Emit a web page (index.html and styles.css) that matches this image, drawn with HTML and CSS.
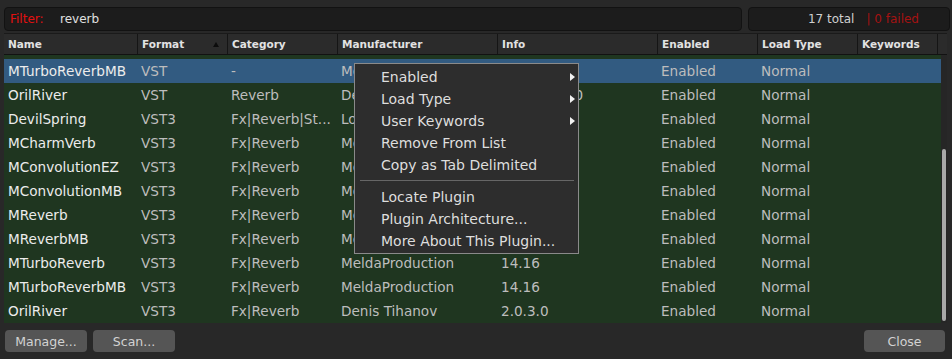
FILE: index.html
```html
<!DOCTYPE html>
<html lang="en">
<head>
  <meta charset="UTF-8">
  <title>Plugin Manager</title>
  <link rel="stylesheet" href="styles.css">
</head>
<body>
  <div class="top-bar">
    <div class="filter-box">
      <span class="filter-label">Filter:</span>
      <span class="filter-text">reverb</span>
    </div>
    <div class="count-box">
      <span class="total">17 total</span>
      <span class="failed">| 0 failed</span>
    </div>
  </div>

  <div class="plugin-table">
    <div class="head-row">
      <div class="hcell">Name</div>
      <div class="hcell sorted">Format<span class="sort-arrow"></span></div>
      <div class="hcell">Category</div>
      <div class="hcell">Manufacturer</div>
      <div class="hcell">Info</div>
      <div class="hcell">Enabled</div>
      <div class="hcell">Load Type</div>
      <div class="hcell">Keywords</div>
      <div class="hcell filler"></div>
    </div>
    <div class="table-body">
      <div class="rows">
        <!-- info cells under the open menu are left empty -->
        <div class="row selected"><span class="name">MTurboReverbMB</span><span>VST</span><span>-</span><span>MeldaProduction</span><span></span><span>Enabled</span><span>Normal</span><span></span></div>
        <div class="row"><span class="name">OrilRiver</span><span>VST</span><span>Reverb</span><span>Denis Tihanov</span><span>2020.3.30.0</span><span>Enabled</span><span>Normal</span><span></span></div>
        <div class="row"><span class="name">DevilSpring</span><span>VST3</span><span>Fx|Reverb|St...</span><span>Lostin70s</span><span></span><span>Enabled</span><span>Normal</span><span></span></div>
        <div class="row"><span class="name">MCharmVerb</span><span>VST3</span><span>Fx|Reverb</span><span>MeldaProduction</span><span></span><span>Enabled</span><span>Normal</span><span></span></div>
        <div class="row"><span class="name">MConvolutionEZ</span><span>VST3</span><span>Fx|Reverb</span><span>MeldaProduction</span><span></span><span>Enabled</span><span>Normal</span><span></span></div>
        <div class="row"><span class="name">MConvolutionMB</span><span>VST3</span><span>Fx|Reverb</span><span>MeldaProduction</span><span></span><span>Enabled</span><span>Normal</span><span></span></div>
        <div class="row"><span class="name">MReverb</span><span>VST3</span><span>Fx|Reverb</span><span>MeldaProduction</span><span></span><span>Enabled</span><span>Normal</span><span></span></div>
        <div class="row"><span class="name">MReverbMB</span><span>VST3</span><span>Fx|Reverb</span><span>MeldaProduction</span><span></span><span>Enabled</span><span>Normal</span><span></span></div>
        <div class="row"><span class="name">MTurboReverb</span><span>VST3</span><span>Fx|Reverb</span><span>MeldaProduction</span><span>14.16</span><span>Enabled</span><span>Normal</span><span></span></div>
        <div class="row"><span class="name">MTurboReverbMB</span><span>VST3</span><span>Fx|Reverb</span><span>MeldaProduction</span><span>14.16</span><span>Enabled</span><span>Normal</span><span></span></div>
        <div class="row"><span class="name">OrilRiver</span><span>VST3</span><span>Fx|Reverb</span><span>Denis Tihanov</span><span>2.0.3.0</span><span>Enabled</span><span>Normal</span><span></span></div>
      </div>
      <div class="scroll-track">
        <div class="scroll-thumb"></div>
      </div>
    </div>
  </div>

  <div class="bottom-bar">
    <button class="btn">Manage...</button>
    <button class="btn">Scan...</button>
    <button class="btn close">Close</button>
  </div>

  <!-- context menu over the selected row -->
  <div class="context-menu">
    <div class="menu-item">Enabled<span class="sub-arrow"></span></div>
    <div class="menu-item">Load Type<span class="sub-arrow"></span></div>
    <div class="menu-item">User Keywords<span class="sub-arrow"></span></div>
    <div class="menu-item">Remove From List</div>
    <div class="menu-item">Copy as Tab Delimited</div>
    <div class="menu-sep"></div>
    <div class="menu-item">Locate Plugin</div>
    <div class="menu-item">Plugin Architecture...</div>
    <div class="menu-item">More About This Plugin...</div>
  </div>
</body>
</html>
```

FILE: styles.css
```css
body {
  margin: 0;
  background-color: #282828;
  font-family: "DejaVu Sans", Verdana, sans-serif;
  color: #ccc;
  position: relative;
  width: 952px;
  height: 359px;
  overflow: hidden;
}
.top-bar {
  display: flex;
  gap: 6px;
  padding: 7px 0 0 4px;
  height: 24px;
}
.filter-box, .count-box {
  height: 22px;
  background-color: #1c1c1c;
  border: 1px solid #121212;
  border-radius: 4px;
  display: flex;
  align-items: center;
  font-size: 12px;
}
.filter-box {
  width: 731px;
  padding-left: 5px;
  box-sizing: content-box;
}
.filter-label {
  color: #e31010;
  width: 50px;
}
.filter-text {
  color: #e0e0e0;
}
.count-box {
  width: 170px;
  justify-content: flex-end;
  padding-right: 30px;
  gap: 12px;
}
.total { color: #cfcfcf; }
.failed { color: #a51212; }

.plugin-table {
  margin: 2px 0 0 4px;
  width: 943px;
}
.head-row {
  display: grid;
  grid-template-columns: 133px 90px 110px 160px 160px 100px 100px 80px 10px;
  height: 20px;
  border-bottom: 1px solid #121212;
  border-top: 1px solid #1a1a1a;
}
.hcell {
  background-color: #2b2b2b;
  border-left: 1px solid #151515;
  font-size: 10.5px;
  font-weight: bold;
  color: #e2e2e2;
  padding-left: 4px;
  display: flex;
  align-items: center;
  position: relative;
}
.hcell:first-child { border-left: none; }
.hcell.filler { padding: 0; }
.sort-arrow {
  position: absolute;
  right: 8px;
  top: 8px;
  border-left: 3.5px solid transparent;
  border-right: 3.5px solid transparent;
  border-bottom: 5px solid #0c0c0c;
}

.table-body {
  display: flex;
  height: 268px;
}
.rows {
  width: 937px;
  background-color: #1f3620;
  padding-top: 4px;
}
.row {
  display: grid;
  grid-template-columns: 133px 90px 110px 160px 160px 100px 100px 80px;
  height: 24px;
  align-items: center;
  font-size: 13.6px;
  color: #bdbdbd;
}
.row span {
  padding-left: 4px;
  white-space: nowrap;
  overflow: hidden;
}
.row .name { color: #ececec; }
.row.selected { background-color: #325b81; }
.scroll-track {
  width: 6px;
  background-color: #262626;
}
.scroll-thumb {
  width: 4px;
  height: 172px;
  margin: 94px 0 0 1px;
  background-color: #a9a9a9;
  border-radius: 2px;
}

.bottom-bar {
  display: flex;
  gap: 6px;
  padding: 7px 0 0 5px;
}
.btn {
  width: 82px;
  height: 22px;
  border: none;
  border-radius: 4px;
  background-color: #555;
  color: #d2d2d2;
  font-family: "DejaVu Sans", Verdana, sans-serif;
  font-size: 12.5px;
  padding: 0;
}
.btn.close {
  margin-left: auto;
  margin-right: 7px;
  width: 81px;
}

.context-menu {
  position: absolute;
  left: 354px;
  top: 63px;
  width: 223px;
  padding: 2px 0 1px;
  background-color: #2d2d2d;
  border: 1px solid #8a8a8a;
  font-size: 14px;
  color: #dedede;
}
.menu-item {
  height: 22px;
  line-height: 22px;
  padding-left: 26px;
  position: relative;
}
.sub-arrow {
  position: absolute;
  right: 3px;
  top: 7px;
  border-top: 4px solid transparent;
  border-bottom: 4px solid transparent;
  border-left: 5px solid #f2f2f2;
}
.menu-sep {
  height: 1px;
  background-color: #666;
  margin: 4px 4px 5px 5px;
}
```
